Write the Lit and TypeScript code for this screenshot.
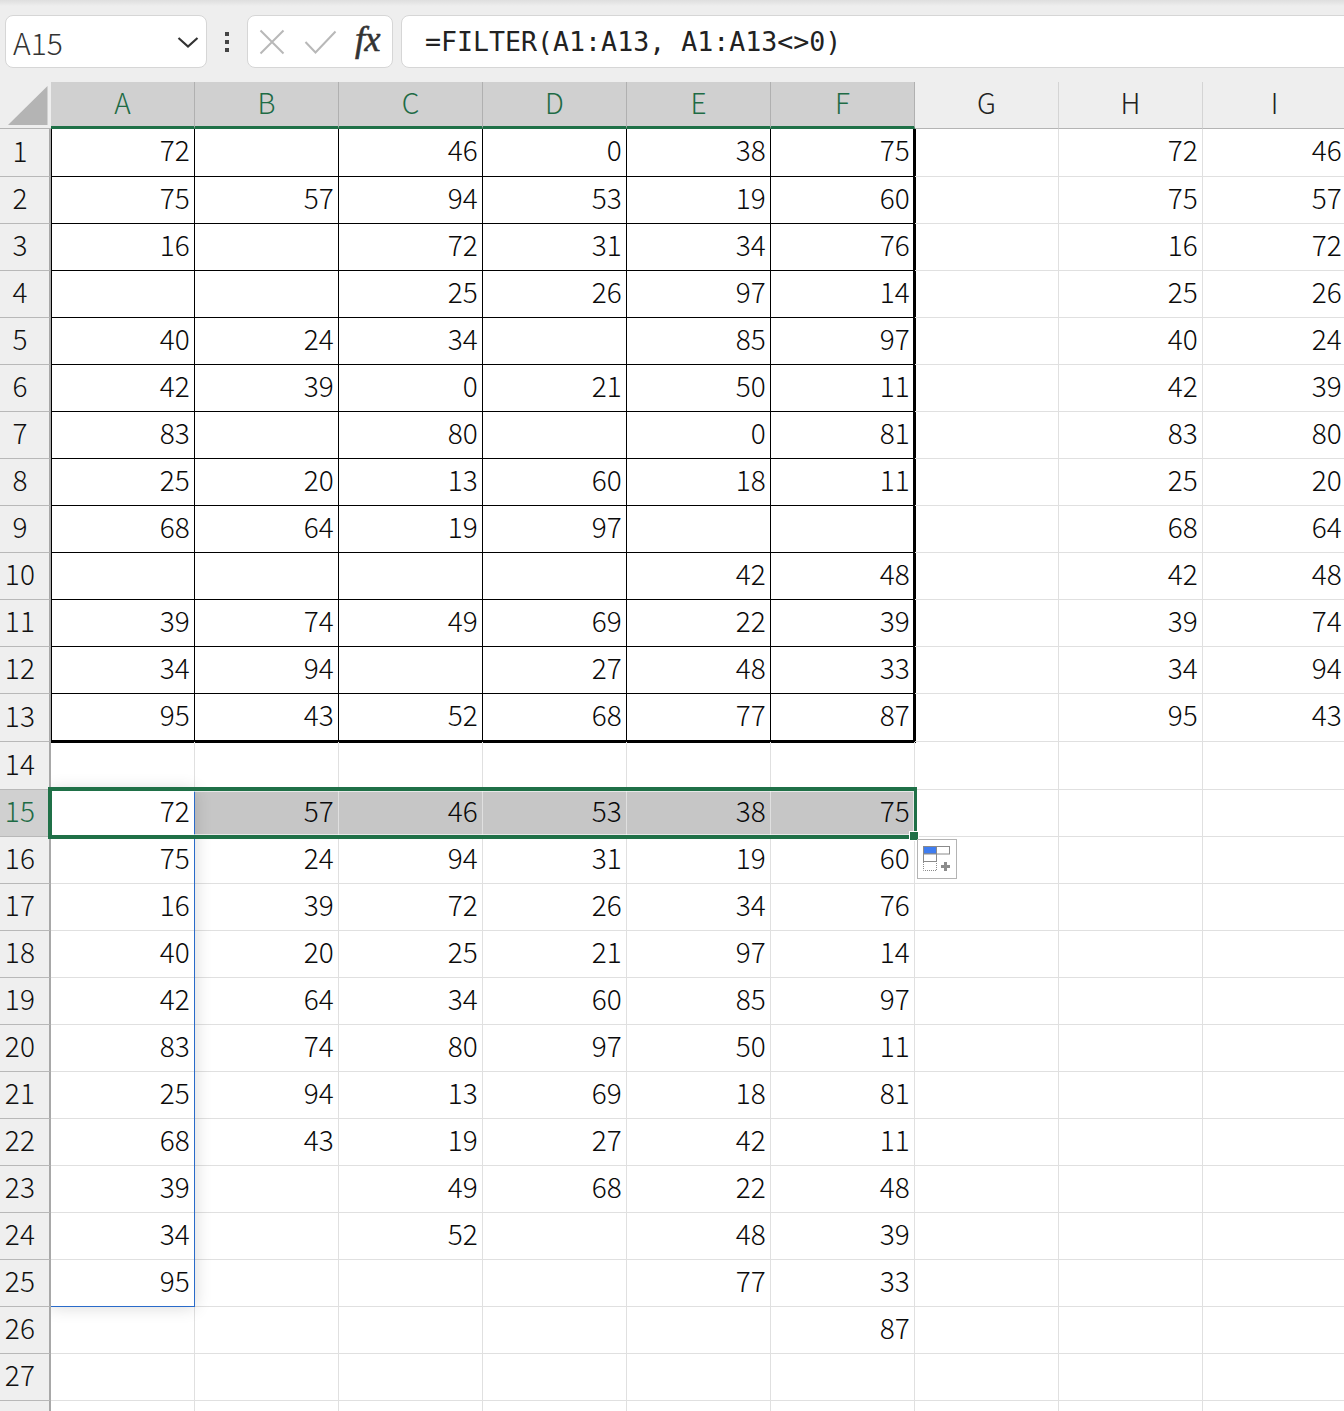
import { LitElement, html, css, svg } from "lit";
import { customElement } from "lit/decorators.js";

const ROWS: (number | null)[][] = [
  [72, null, 46, 0, 38, 75, null, 72, 46],
  [75, 57, 94, 53, 19, 60, null, 75, 57],
  [16, null, 72, 31, 34, 76, null, 16, 72],
  [null, null, 25, 26, 97, 14, null, 25, 26],
  [40, 24, 34, null, 85, 97, null, 40, 24],
  [42, 39, 0, 21, 50, 11, null, 42, 39],
  [83, null, 80, null, 0, 81, null, 83, 80],
  [25, 20, 13, 60, 18, 11, null, 25, 20],
  [68, 64, 19, 97, null, null, null, 68, 64],
  [null, null, null, null, 42, 48, null, 42, 48],
  [39, 74, 49, 69, 22, 39, null, 39, 74],
  [34, 94, null, 27, 48, 33, null, 34, 94],
  [95, 43, 52, 68, 77, 87, null, 95, 43],
  [],
  [72, 57, 46, 53, 38, 75],
  [75, 24, 94, 31, 19, 60],
  [16, 39, 72, 26, 34, 76],
  [40, 20, 25, 21, 97, 14],
  [42, 64, 34, 60, 85, 97],
  [83, 74, 80, 97, 50, 11],
  [25, 94, 13, 69, 18, 81],
  [68, 43, 19, 27, 42, 11],
  [39, null, 49, 68, 22, 48],
  [34, null, 52, null, 48, 39],
  [95, null, null, null, 77, 33],
  [null, null, null, null, null, 87],
  [],
  [],
];
const COLS = ["A", "B", "C", "D", "E", "F", "G", "H", "I"];

@customElement("app-root")
export class AppRoot extends LitElement {
  static styles = css`
    :host {
      display: block;
      width: 1344px;
      height: 1411px;
      overflow: hidden;
      background: #fff;
      font-family: "Noto Sans CJK JP", "Liberation Sans", sans-serif;
      color: #111;
    }
    .bar {
      height: 82px;
      box-sizing: border-box;
      background: linear-gradient(#dedede, #eeeeee 6px);
      padding: 15px 0 14px 5px;
      display: flex;
      align-items: stretch;
    }
    .box {
      box-sizing: border-box;
      background: #fff;
      border: 1px solid #d6d6d6;
      border-radius: 8px;
      display: flex;
      align-items: center;
    }
    .name {
      width: 202px;
      padding: 0 7px 0 7px;
      justify-content: space-between;
      font-size: 30px;
      font-weight: 300;
      color: #333;
    }
    .grip {
      width: 40px;
      display: flex;
      flex-direction: column;
      align-items: center;
      gap: 4px;
      padding-top: 17px;
      box-sizing: border-box;
    }
    .grip i {
      width: 4px;
      height: 4px;
      background: #444;
      display: block;
    }
    .fxbox {
      width: 146px;
      padding-left: 11px;
      gap: 19px;
    }
    .fx {
      font-family: "Liberation Serif", serif;
      font-style: italic;
      font-weight: 400;
      font-size: 36px;
      color: #333;
      -webkit-text-stroke: 0.6px #333;
      margin-left: -1px;
      line-height: 1;
      margin-top: -6px;
      letter-spacing: -0.5px;
    }
    .formula {
      flex: 1;
      margin-left: 8px;
      margin-right: -20px;
      padding: 0 0 1px 23px;
      font-family: "DejaVu Sans Mono", monospace;
      font-size: 26.6px;
      color: #222;
      white-space: pre;
    }
    .sheet {
      position: relative;
      display: grid;
      grid-template-columns: 51px repeat(9, 144px);
      grid-template-rows: 47px 48px repeat(11, 47px) 48px 48px repeat(13, 47px) 12px;
      width: 1347px;
      height: 1329px;
      overflow: hidden;
    }
    .corner {
      box-sizing: border-box;
      background: #eeeeee;
      border-bottom: 1px solid #b4b4b4;
      position: relative;
      z-index: 3;
    }
    .corner svg {
      display: block;
    }
    .ch {
      box-sizing: border-box;
      background: #eeeeee;
      border-right: 1px solid #d4d4d4;
      border-bottom: 1px solid #b4b4b4;
      display: flex;
      align-items: center;
      justify-content: center;
      font-size: 28px;
      font-weight: 300;
      padding-bottom: 7px;
      color: #222;
    }
    .ch.sel {
      background: #d0d0d0;
      color: #1e6b45;
      border-right-color: #b0b0b0;
      border-bottom: 3px solid #1f7047;
      padding-bottom: 5px;
    }
    .rh {
      box-sizing: border-box;
      background: #efefef;
      border-right: 2px solid #a8a8a8;
      border-bottom: 1px solid #b8b8b8;
      display: flex;
      align-items: center;
      justify-content: center;
      padding: 0 9px 6px 0;
      font-size: 28px;
      font-weight: 300;
      letter-spacing: 0.2px;
      color: #111;
      position: relative;
      z-index: 3;
    }
    .rh.sel {
      background: #d0d0d0;
      color: #1e6b45;
    }
    .c {
      box-sizing: border-box;
      border-right: 1px solid #e0e0e0;
      border-bottom: 1px solid #e0e0e0;
      display: flex;
      align-items: center;
      justify-content: flex-end;
      padding: 0 4px 7px 0;
      font-size: 28px;
      font-weight: 300;
      letter-spacing: 0.2px;
      color: #0a0a0a;
    }
    .c.data {
      border-right-color: #000;
      border-bottom-color: #000;
    }
    .c.first {
      border-left: 1px solid #000;
    }
    .c.lastcol {
      border-right-width: 3px;
      margin-right: -1px;
      padding-right: 3px;
    }
    .c.lastrow {
      border-bottom-width: 3px;
      margin-bottom: -1px;
      padding-bottom: 6px;
    }
    .c.hl {
      background: #c6c6c6;
    }
    .spill {
      position: absolute;
      left: 50px;
      top: 708px;
      width: 145px;
      height: 517px;
      box-sizing: border-box;
      border-right: 1px solid #2a6bc9;
      border-bottom: 1.5px solid #2a6bc9;
      box-shadow: 0 0 16px rgba(0, 0, 0, 0.16);
      z-index: 1;
      pointer-events: none;
    }
    .selection {
      position: absolute;
      left: 48px;
      top: 705px;
      width: 869px;
      height: 52px;
      box-sizing: border-box;
      border: 4px solid #1f7047;
      border-right-width: 3px;
      box-shadow: inset 0 0 0 1px rgba(255, 255, 255, 0.6);
      z-index: 4;
    }
    .handle {
      position: absolute;
      left: 909px;
      top: 749px;
      width: 10px;
      height: 10px;
      box-sizing: border-box;
      background: #1f7047;
      border: 1px solid #fff;
      z-index: 5;
    }
    .paste {
      position: absolute;
      left: 917px;
      top: 757px;
      width: 40px;
      height: 40px;
      z-index: 5;
      box-sizing: border-box;
      background: #fff;
      border: 1px solid #b4b4b4;
    }
    .paste svg {
      display: block;
    }
  `;

  private cell(value: number | null | undefined, r: number, c: number) {
    const cls = ["c"];
    if (r < 13 && c < 6) {
      cls.push("data");
      if (c === 0) cls.push("first");
      if (c === 5) cls.push("lastcol");
      if (r === 12) cls.push("lastrow");
    }
    if (r === 14 && c > 0 && c < 6) cls.push("hl");
    return html`<div class=${cls.join(" ")}>${value ?? ""}</div>`;
  }

  render() {
    return html`
      <div class="bar">
        <div class="box name">
          <span>A15</span>
          <svg width="22" height="12" viewBox="0 0 22 12">
            <path d="M1.5 2 L11 10.5 L20.5 2" fill="none" stroke="#333" stroke-width="2.2" />
          </svg>
        </div>
        <div class="grip"><i></i><i></i><i></i></div>
        <div class="box fxbox">
          <svg width="26" height="26" viewBox="0 0 26 26">
            <path d="M1.5 1.5 L24.5 24.5 M24.5 1.5 L1.5 24.5" fill="none" stroke="#b8b8b8" stroke-width="2" />
          </svg>
          <svg width="33" height="24" viewBox="0 0 33 24">
            <path d="M1.5 12 L11.5 22.5 L31.5 1.5" fill="none" stroke="#b8b8b8" stroke-width="2" />
          </svg>
          <span class="fx">fx</span>
        </div>
        <div class="box formula">=FILTER(A1:A13, A1:A13&lt;&gt;0)</div>
      </div>
      <div class="sheet">
        <div class="corner">
          <svg width="51" height="46" viewBox="0 0 51 46">
            ${svg`<polygon points="47.5,4 47.5,43 8,43" fill="#b4b4b4" />`}
          </svg>
        </div>
        ${COLS.map((h, i) => html`<div class="ch ${i < 6 ? "sel" : ""}">${h}</div>`)}
        ${ROWS.map(
          (row, r) => html`
            <div class="rh ${r === 14 ? "sel" : ""}">${r < 27 ? r + 1 : ""}</div>
            ${COLS.map((_, c) => this.cell(row[c], r, c))}
          `
        )}
        <div class="spill"></div>
        <div class="selection"></div>
        <div class="handle"></div>
        <div class="paste">
          <svg width="38" height="38" viewBox="0 0 38 38">
            <rect x="5.5" y="6.5" width="13" height="7.5" fill="#3f7df0" stroke="#8a8a8a" />
            <rect x="18.5" y="6.5" width="13" height="7.5" fill="#fff" stroke="#8a8a8a" />
            <rect x="5.5" y="14" width="13" height="7.5" fill="#fff" stroke="#8a8a8a" />
            <path d="M5.5 22 V30.5 H18.5 V22" fill="none" stroke="#8a8a8a" stroke-dasharray="1 1" />
            <path d="M23 26.5 H32 M27.5 22 V31" fill="none" stroke="#8c8c8c" stroke-width="3" />
          </svg>
        </div>
      </div>
    `;
  }
}
